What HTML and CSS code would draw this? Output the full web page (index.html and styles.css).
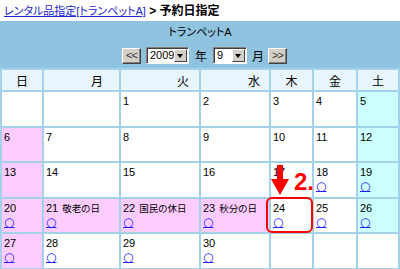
FILE: index.html
```html
<!DOCTYPE html>
<html lang="ja">
<head>
    <meta charset="UTF-8">
    <title>予約日指定</title>
    <link rel="stylesheet" href="styles.css">
</head>
<body>
    <div class="crumb">
        <a href="#" class="crumb-link">レンタル品指定[トランペットA]</a><b class="crumb-here"> &gt; 予約日指定</b>
    </div>

    <div class="panel">
        <div class="item-name">トランペットA</div>
        <div class="nav">
            <span class="btn">&lt;&lt;</span>
            <span class="select year"><span class="val">2009</span><span class="drop"></span></span>
            <span class="unit">年</span>
            <span class="select month"><span class="val">9</span><span class="drop"></span></span>
            <span class="unit">月</span>
            <span class="btn">&gt;&gt;</span>
        </div>
    </div>

    <div class="cal-wrap">
        <table class="cal">
            <tr>
                <th class="c-sun">日</th>
                <th class="c-mon">月</th>
                <th class="c-tue">火</th>
                <th class="c-wed">水</th>
                <th class="c-thu">木</th>
                <th class="c-fri">金</th>
                <th class="c-sat">土</th>
            </tr>
            <tr class="week">
                <td></td>
                <td></td>
                <td><div class="day">1</div></td>
                <td><div class="day">2</div></td>
                <td><div class="day">3</div></td>
                <td><div class="day">4</div></td>
                <td class="sat"><div class="day">5</div></td>
            </tr>
            <tr class="week">
                <td class="sun"><div class="day">6</div></td>
                <td><div class="day">7</div></td>
                <td><div class="day">8</div></td>
                <td><div class="day">9</div></td>
                <td><div class="day">10</div></td>
                <td><div class="day">11</div></td>
                <td class="sat"><div class="day">12</div></td>
            </tr>
            <tr class="week">
                <td class="sun"><div class="day">13</div></td>
                <td><div class="day">14</div></td>
                <td><div class="day">15</div></td>
                <td><div class="day">16</div></td>
                <td><div class="day">17</div></td>
                <td><div class="day">18</div><a href="#" class="book">○</a></td>
                <td class="sat"><div class="day">19</div><a href="#" class="book">○</a></td>
            </tr>
            <tr class="week">
                <td class="sun"><div class="day">20</div><a href="#" class="book">○</a></td>
                <td class="sun"><div class="day">21<span class="hol">敬老の日</span></div><a href="#" class="book">○</a></td>
                <td class="sun"><div class="day">22<span class="hol">国民の休日</span></div><a href="#" class="book">○</a></td>
                <td class="sun"><div class="day">23<span class="hol">秋分の日</span></div><a href="#" class="book">○</a></td>
                <td><div class="day">24</div><a href="#" class="book">○</a></td>
                <td><div class="day">25</div><a href="#" class="book">○</a></td>
                <td class="sat"><div class="day">26</div><a href="#" class="book">○</a></td>
            </tr>
            <tr class="week">
                <td class="sun"><div class="day">27</div><a href="#" class="book">○</a></td>
                <td><div class="day">28</div><a href="#" class="book">○</a></td>
                <td><div class="day">29</div><a href="#" class="book">○</a></td>
                <td><div class="day">30</div><a href="#" class="book">○</a></td>
                <td></td>
                <td></td>
                <td></td>
            </tr>
        </table>

        <!-- step 2 annotation -->
        <div class="mark-box"></div>
        <svg class="mark-arrow" width="24" height="36" viewBox="0 0 24 36">
            <rect x="9" y="5" width="6" height="15" fill="#f00"/>
            <polygon points="3,19 21,19 12,35" fill="#f00"/>
        </svg>
        <div class="mark-step">2.</div>
    </div>
</body>
</html>
```

FILE: styles.css
```css
* {
    box-sizing: border-box;
}

body {
    margin: 0;
    font-family: "Liberation Sans", "Noto Sans CJK JP", sans-serif;
    font-size: 12px;
    font-feature-settings: "palt";
    color: #000;
    background: #fff;
}

.crumb {
    height: 21px;
    padding: 5px 0 0 4px;
    line-height: 13px;
    white-space: nowrap;
}

.crumb-link {
    font-size: 11px;
    color: #2424d0;
    text-decoration: underline;
}

.crumb-here {
    font-weight: bold;
}

.panel {
    height: 47px;
    padding-top: 4px;
    background: #8fc3e0;
    text-align: center;
}

.item-name {
    font-size: 11px;
    line-height: 14px;
}

.nav {
    margin-top: 8px;
    padding-left: 9px;
    display: flex;
    justify-content: center;
    align-items: center;
    height: 17px;
}

.btn {
    width: 19px;
    height: 16px;
    background: #d4d0c8;
    border: 1px solid;
    border-color: #fff #404040 #404040 #fff;
    box-shadow: inset -1px -1px 0 #808080;
    font-size: 11px;
    line-height: 13px;
    color: #333;
    letter-spacing: -1px;
    text-align: center;
}

.select {
    height: 17px;
    display: flex;
    align-items: center;
    background: #fff;
    border: 1px solid;
    border-color: #808080 #fff #fff #808080;
    box-shadow: inset 1px 1px 0 #404040;
    padding: 1px 1px 1px 3px;
    text-align: left;
}

.select .val {
    flex: 1;
    font-size: 11px;
    line-height: 13px;
}

.select .drop {
    position: relative;
    flex: none;
    width: 13px;
    height: 13px;
    background: #d4d0c8;
    border: 1px solid;
    border-color: #fff #404040 #404040 #fff;
}

.select .drop::after {
    content: "";
    position: absolute;
    left: 2px;
    top: 4px;
    border-left: 3.5px solid transparent;
    border-right: 3.5px solid transparent;
    border-top: 4px solid #000;
}

.year {
    width: 43px;
    margin: 0 6px 0 5px;
}

.month {
    width: 34px;
    margin: 0 5px 0 6px;
}

.nav .btn:last-child {
    margin-left: 4px;
}

.cal-wrap {
    position: relative;
}

.cal {
    width: 400px;
    table-layout: fixed;
    border-collapse: separate;
    border-spacing: 2px;
    background: #a3d1ea;
}

.cal th {
    height: 20px;
    padding: 0;
    background: #e8f5fd;
    font-weight: normal;
    font-size: 12px;
    text-align: center;
}

.c-sun { width: 40px; }
.c-mon { width: 75px; }
.c-tue { width: 78px; }
.c-wed { width: 68px; }
.c-thu { width: 41px; }
.c-fri { width: 42px; }
.c-sat { width: 40px; }

.cal th.c-mon { text-align: right; padding-right: 16px; }
.cal th.c-tue { text-align: right; padding-right: 10px; }
.cal th.c-wed { text-align: right; padding-right: 9px; }

.week {
    height: 33.6px;
}

.cal td {
    padding: 3px 0 0 2px;
    background: #fff;
    vertical-align: top;
}

.cal td.sun { background: #ffccff; }
.cal td.sat { background: #ccffff; }

.day {
    font-size: 11px;
    line-height: 13px;
    white-space: nowrap;
}

.hol {
    margin-left: 4px;
    font-size: 9.5px;
}

.book {
    display: block;
    width: 12px;
    font-family: "DejaVu Sans", sans-serif;
    font-size: 12px;
    line-height: 14px;
    color: #2020ff;
    text-decoration: underline;
}

.mark-box {
    position: absolute;
    left: 266px;
    top: 129px;
    width: 47px;
    height: 36px;
    border: 2px solid #f00;
    border-radius: 6px;
}

.mark-arrow {
    position: absolute;
    left: 268px;
    top: 92px;
}

.mark-step {
    position: absolute;
    left: 294px;
    top: 102px;
    font-size: 24px;
    line-height: 24px;
    font-weight: bold;
    color: #f00;
}
```
